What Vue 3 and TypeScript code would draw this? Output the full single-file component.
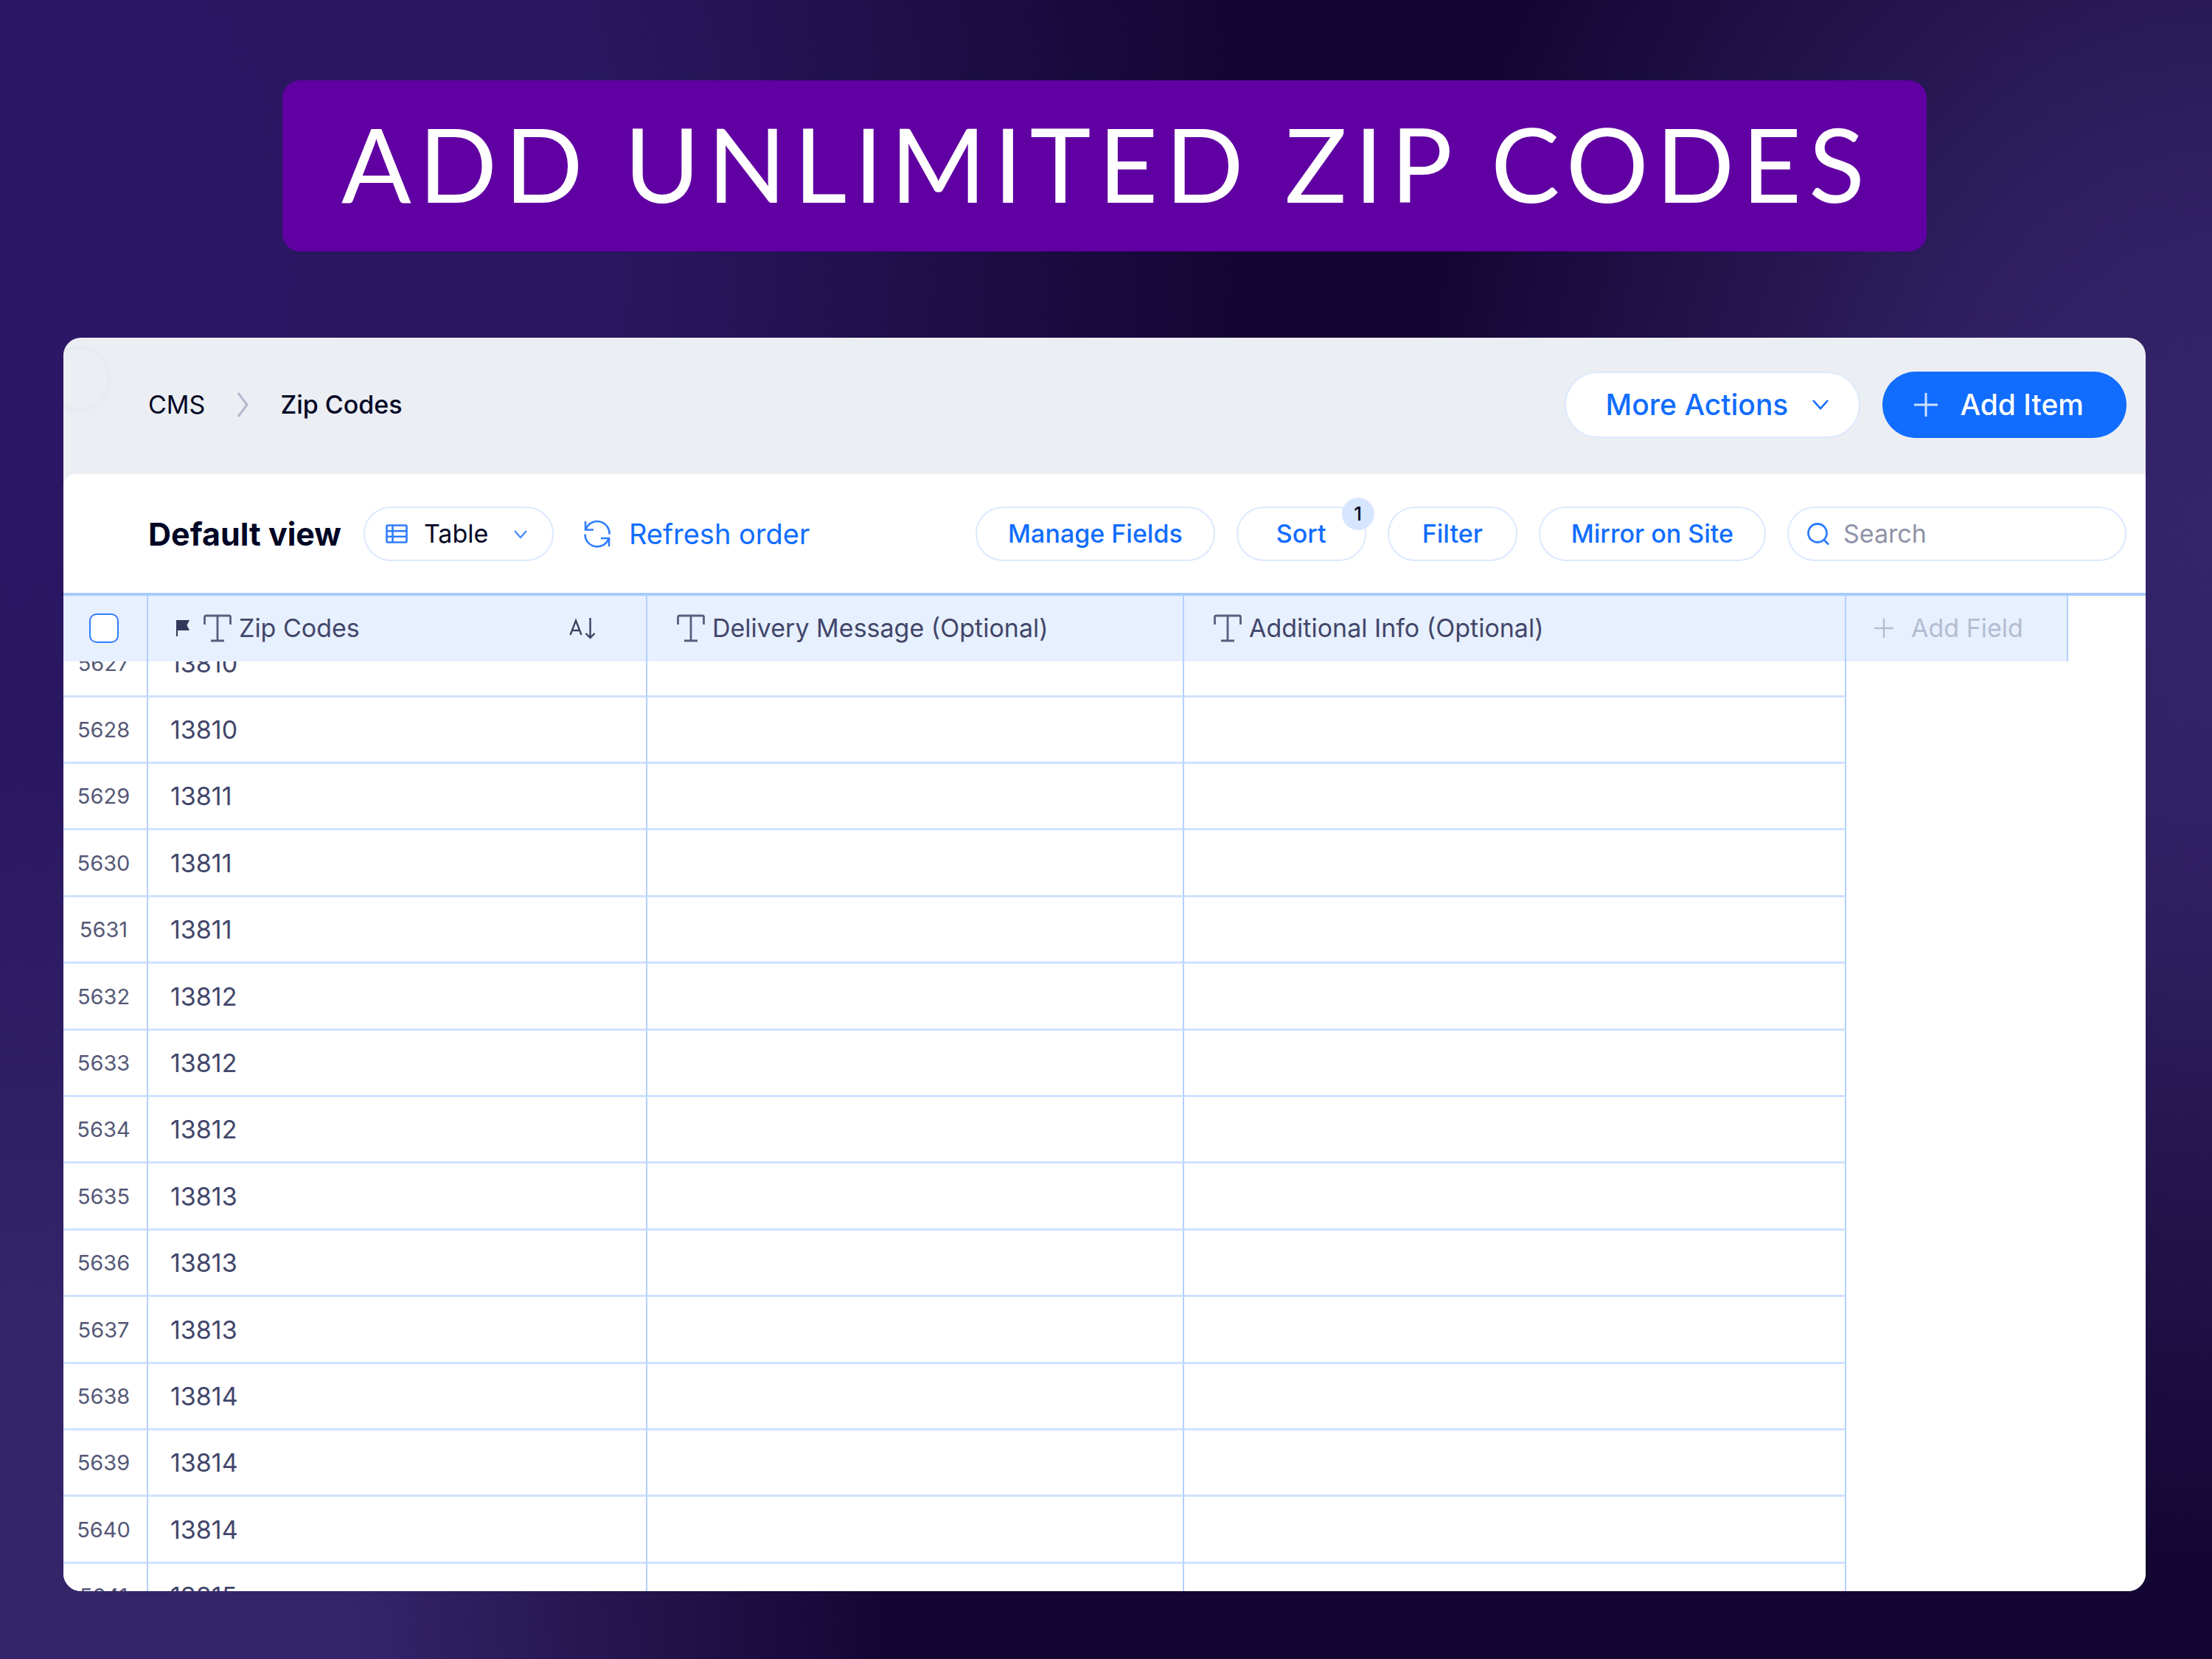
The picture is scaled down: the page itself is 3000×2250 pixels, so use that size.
<script setup lang="ts">
import { onMounted, ref } from 'vue'

interface Row {
  index: number
  zip: string
}

const zips: string[] = [
  '13810', '13810', '13811', '13811', '13811', '13812', '13812', '13812',
  '13813', '13813', '13813', '13814', '13814', '13814', '13815',
]
const rows: Row[] = zips.map((zip, i) => ({ index: 5627 + i, zip }))

const view = ref('Table')
const query = ref('')
const grid = ref<HTMLElement | null>(null)

// The list opens part-way through a row, under the sticky header.
onMounted(() => {
  if (grid.value) grid.value.scrollTop = 42
})
</script>

<template>
  <main class="page">
    <h1 class="banner">ADD UNLIMITED ZIP CODES</h1>

    <section class="card">
      <header class="topbar">
        <span class="toggle" aria-hidden="true"></span>
        <nav class="crumbs" aria-label="Breadcrumb">
          <a href="#cms">CMS</a>
          <svg width="16" height="36" viewBox="0 0 16 36" aria-hidden="true">
            <path d="M2 2 L14 18 L2 34" fill="none" stroke="#b5b8cd" stroke-width="3" />
          </svg>
          <a href="#zip-codes" class="current" aria-current="page">Zip Codes</a>
        </nav>
        <div class="actions">
          <button type="button" class="big more" aria-haspopup="menu">
            More Actions
            <svg width="24" height="16" viewBox="0 0 24 16" aria-hidden="true">
              <path d="M2 2 L12 13 L22 2" fill="none" stroke="#116dff" stroke-width="2.6" />
            </svg>
          </button>
          <button type="button" class="big add">
            <svg width="34" height="34" viewBox="0 0 34 34" aria-hidden="true">
              <path d="M17 1 V33 M1 17 H33" fill="none" stroke="#cfe1ff" stroke-width="3" />
            </svg>
            Add Item
          </button>
        </div>
      </header>

      <div class="toolbar">
        <h2>Default view</h2>
        <label class="view">
          <svg class="view-icon" width="30" height="26" viewBox="0 0 30 26" aria-hidden="true">
            <path d="M3 1.5 H27 Q28.500 1.500 28.500 3 V23 Q28.500 24.500 27 24.500 H3 Q1.500 24.500 1.500 23 V3 Q1.500 1.500 3 1.500 Z M9.500 1.500 V24.500 M1.500 9.200 H28.500 M1.500 16.800 H28.500" fill="none" stroke="#2f7dff" stroke-width="2.600" />
          </svg>
          <select v-model="view" aria-label="View layout">
            <option>Table</option>
            <option>List</option>
          </select>
          <svg class="view-arrow" width="20" height="13" viewBox="0 0 20 13" aria-hidden="true">
            <path d="M2 2 L10 11 L18 2" fill="none" stroke="#4b8eff" stroke-width="2.400" />
          </svg>
        </label>
        <button type="button" class="refresh">
          <svg width="38" height="38" viewBox="0 0 38 38" aria-hidden="true">
            <g fill="none" stroke="#2f7dff" stroke-width="2.600">
              <path d="M3 2 V13.500 H14" />
              <path d="M3.500 13 A16.500 16.500 0 0 1 35.500 19.500" />
              <path d="M35 36 V25 H24" />
              <path d="M34.500 25.500 A16.500 16.500 0 0 1 2.500 19.500" />
            </g>
          </svg>
          Refresh order
        </button>
        <div class="tools">
          <button type="button" class="pill">Manage Fields</button>
          <button type="button" class="pill">Sort<span class="badge">1</span></button>
          <button type="button" class="pill">Filter</button>
          <button type="button" class="pill">Mirror on Site</button>
          <label class="search">
            <svg width="32" height="32" viewBox="0 0 32 32" aria-hidden="true">
              <g fill="none" stroke="#2f7dff" stroke-width="2.800">
                <circle cx="15" cy="15" r="12.500" />
                <path d="M23.500 24 L30 30.500" />
              </g>
            </svg>
            <input v-model="query" type="text" placeholder="Search" aria-label="Search" />
          </label>
        </div>
      </div>

      <div ref="grid" class="grid">
        <table>
          <colgroup>
            <col class="c-index" />
            <col class="c-zip" />
            <col class="c-message" />
            <col class="c-info" />
            <col class="c-add" />
            <col />
          </colgroup>
          <thead>
            <tr>
              <th class="check"><input type="checkbox" aria-label="Select all items" /></th>
              <th class="zip-head">
                <div class="head">
                  <svg class="flag" width="20" height="24" viewBox="0 0 20 24" aria-hidden="true">
                    <path d="M1 1 H19 L15.500 8 L19 15 H3 V23 H1 Z" fill="#33385a" />
                  </svg>
                  <svg class="type" width="38" height="38" viewBox="0 0 38 38" aria-hidden="true">
                    <path d="M1.500 14 V4 Q1.500 2 3.500 2 H34.500 Q36.500 2 36.500 4 V14 M19 2 V36 M10 36 H28" fill="none" stroke="#595e7c" stroke-width="2.800" />
                  </svg>
                  Zip Codes
                  <svg class="order" width="36" height="30" viewBox="0 0 36 30" aria-hidden="true">
                    <g fill="none" stroke="#3d4263" stroke-width="2.400">
                      <path d="M1.500 24 L9 4.500 L16.500 24 M4 18 H14" />
                      <path d="M28.500 1 V28 M22.500 22 L28.500 28 L34.500 22" />
                    </g>
                  </svg>
                </div>
              </th>
              <th v-for="name in ['Delivery Message (Optional)', 'Additional Info (Optional)']" :key="name">
                <div class="head">
                  <svg class="type" width="38" height="38" viewBox="0 0 38 38" aria-hidden="true">
                    <path d="M1.500 14 V4 Q1.500 2 3.500 2 H34.500 Q36.500 2 36.500 4 V14 M19 2 V36 M10 36 H28" fill="none" stroke="#595e7c" stroke-width="2.800" />
                  </svg>
                  {{ name }}
                </div>
              </th>
              <th class="add-head">
                <button type="button" class="add-field">
                  <svg width="26" height="26" viewBox="0 0 26 26" aria-hidden="true">
                    <path d="M13 0 V26 M0 13 H26" fill="none" stroke="#b3bdd1" stroke-width="2.400" />
                  </svg>
                  Add Field
                </button>
              </th>
              <td class="rest"></td>
            </tr>
          </thead>
          <tbody>
            <tr v-for="row in rows" :key="row.index">
              <td class="index">{{ row.index }}</td>
              <td class="zip">{{ row.zip }}</td>
              <td></td>
              <td></td>
              <td class="rest"></td>
              <td class="rest"></td>
            </tr>
          </tbody>
        </table>
      </div>
    </section>
  </main>
</template>

<style>
body {
  margin: 0;
}
</style>

<style scoped>
* {
  box-sizing: border-box;
}

.page {
  display: flex;
  flex-direction: column;
  align-items: center;
  height: 100vh;
  padding: 109px 90px 92px 86px;
  font-family: Inter, 'Liberation Sans', sans-serif;
  font-size: 34px;
  color: #000624;
  background:
    radial-gradient(ellipse 36% 62% at 100% 32%, #34246a 0%, #34246add 35%, #34246a00 100%),
    radial-gradient(ellipse 40% 55% at 0% 100%, #34256b 0%, #34246a 40%, #34246a00 100%),
    radial-gradient(ellipse 56% 90% at 0% 15%, #2b1766 0%, #29175f 50%, #29175f00 100%),
    #140633;
}

.banner {
  margin: 0 0 117px;
  padding: 0 74px 0 80px;
  height: 232px;
  border-radius: 24px;
  background: #6000a2;
  color: #fff;
  font-family: Lato, sans-serif;
  font-size: 140px;
  font-weight: 400;
  line-height: 224px;
  letter-spacing: 10px;
  white-space: nowrap;
}

.card {
  display: flex;
  flex-direction: column;
  flex: 1;
  align-self: stretch;
  min-height: 0;
  overflow: hidden;
  border-radius: 24px;
  background: #ebeef3;
}

button,
select,
input {
  margin: 0;
  padding: 0;
  border: 0;
  background: none;
  font: inherit;
  color: inherit;
}

a {
  color: inherit;
  text-decoration: none;
}

svg {
  flex: none;
}

.topbar {
  position: relative;
  display: flex;
  align-items: center;
  justify-content: space-between;
  height: 185px;
  padding: 0 26px 4px 115px;
}

.toggle {
  position: absolute;
  left: -20px;
  top: 16px;
  width: 80px;
  height: 80px;
  border-radius: 50%;
  background: #ebeef3;
  box-shadow: 0 0 14px #e2e6eb;
}

.crumbs {
  position: relative;
  display: flex;
  align-items: center;
  gap: 43px;
}

.current {
  font-weight: 500;
}

.actions {
  display: flex;
  gap: 30px;
}

.big {
  display: flex;
  align-items: center;
  height: 90px;
  border-radius: 45px;
  font-size: 39px;
  font-weight: 500;
}

.more {
  gap: 32px;
  padding: 0 40px 0 54px;
  border: 2px solid #dce9ff;
  background: #fff;
  color: #116dff;
}

.add {
  gap: 29px;
  padding: 0 58px 0 42px;
  background: #116dff;
  color: #fff;
}

.toolbar {
  display: flex;
  align-items: center;
  height: 165px;
  padding: 0 26px 0 115px;
  border-bottom: 4px solid #a8caff;
  border-top-left-radius: 16px;
  background: #fff;
}

h2 {
  margin: 0;
  font-size: 43px;
  font-weight: 700;
}

.view {
  position: relative;
  margin-left: 30px;
}

.view select {
  display: block;
  width: 258px;
  height: 74px;
  padding-left: 80px;
  border: 2px solid #dce9ff;
  border-radius: 37px;
  appearance: none;
}

.view-icon {
  position: absolute;
  left: 30px;
  top: 24px;
}

.view-arrow {
  position: absolute;
  right: 35px;
  top: 31px;
}

.refresh {
  display: flex;
  align-items: center;
  gap: 24px;
  margin-left: 40px;
  font-size: 38px;
  color: #116dff;
}

.tools {
  display: flex;
  gap: 29px;
  margin-left: auto;
}

.pill {
  position: relative;
  height: 74px;
  min-width: 176px;
  padding: 0 42px;
  border: 2px solid #dce9ff;
  border-radius: 37px;
  font-weight: 500;
  color: #116dff;
}

.badge {
  position: absolute;
  right: -13px;
  top: -14px;
  width: 44px;
  height: 44px;
  border-radius: 22px;
  background: #d6e6ff;
  color: #000624;
  font-size: 26px;
  line-height: 44px;
}

.search {
  display: flex;
  align-items: center;
  gap: 18px;
  width: 460px;
  height: 74px;
  padding: 0 24px;
  border: 2px solid #dce9ff;
  border-radius: 37px;
}

.search input {
  width: 100%;
  outline: none;
}

.search input::placeholder {
  color: #8f92a8;
  opacity: 1;
}

.grid {
  flex: 1;
  min-height: 0;
  overflow: auto;
  scrollbar-width: none;
  background: #fff;
}

table {
  width: 100%;
  table-layout: fixed;
  border-spacing: 0;
  color: #42466a;
}

.c-index {
  width: 115px;
}

.c-zip {
  width: 677px;
}

.c-message {
  width: 728px;
}

.c-info {
  width: 898px;
}

.c-add {
  width: 301px;
}

thead tr {
  height: 89px;
}

tbody tr {
  height: 90px;
}

tbody tr:nth-child(5n + 1),
tbody tr:nth-child(5n + 4) {
  height: 91px;
}

th {
  position: sticky;
  top: 0;
  padding: 0 0 2px 40px;
  border-right: 2px solid #b3d0ff;
  background: #e7f0ff;
  font-weight: 400;
  text-align: left;
}

thead .rest {
  position: sticky;
  top: 0;
  background: #fff;
}

td {
  padding: 0;
  border-right: 2px solid #b3d0ff;
  border-bottom: 3px solid #cfe1ff;
}

.rest {
  border: 0;
}

.check {
  padding: 0 4px 2px 0;
}

.check input {
  display: block;
  width: 40px;
  height: 40px;
  margin: 0 auto;
  border: 2px solid #2f7dff;
  border-radius: 10px;
  background: #fff;
  appearance: none;
}

.head {
  display: flex;
  align-items: center;
  gap: 10px;
}

.zip-head {
  padding: 0 68px 2px 37px;
}

.flag {
  margin-right: 8px;
}

.order {
  margin-left: auto;
}

.add-field {
  display: flex;
  align-items: center;
  gap: 24px;
  color: #b3bdd1;
}

.add-head {
  padding-left: 38px;
}

.index {
  padding-right: 4px;
  font-size: 29px;
  color: #555976;
  text-align: center;
}

.zip {
  padding-left: 30px;
}
</style>
